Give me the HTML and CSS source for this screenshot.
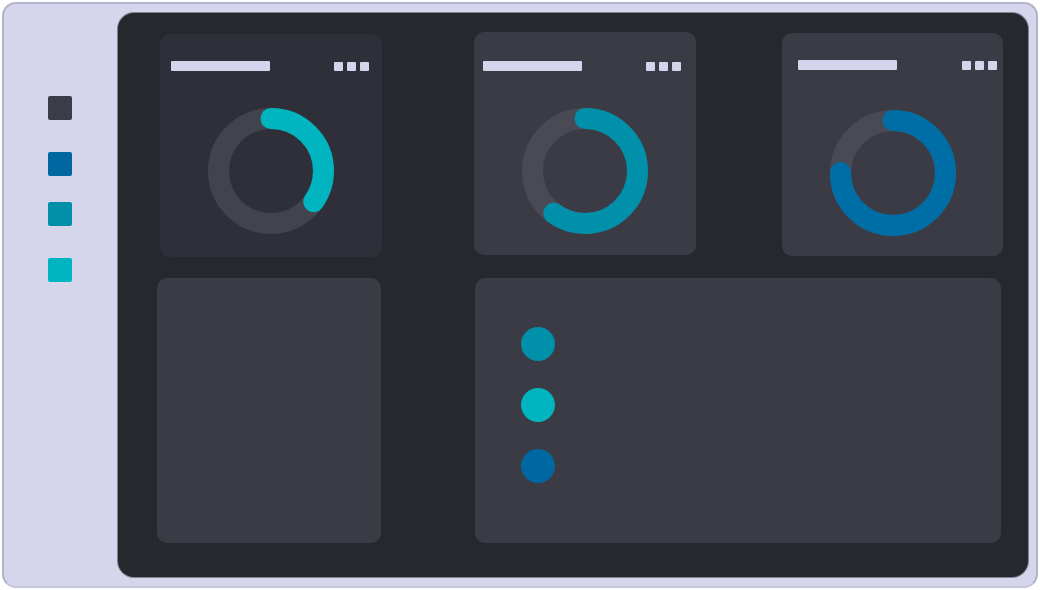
FILE: index.html
```html
<!DOCTYPE html>
<html>
<head>
<meta charset="utf-8">
<link rel="stylesheet" href="styles.css">
</head>
<body>
<div class="frame">
  <aside class="sidebar">
    <div class="swatch swatch-dark"></div>
    <div class="swatch swatch-blue"></div>
    <div class="swatch swatch-teal"></div>
    <div class="swatch swatch-cyan"></div>
  </aside>
  <main class="panel">
    <div class="row row-top">
      <section class="card card-gauge card-a">
        <div class="card-head">
          <span class="title-bar"></span>
          <span class="dots"><i></i><i></i><i></i></span>
        </div>
        <svg class="donut" viewBox="0 0 128 128" width="128" height="128">
          <circle class="track track-a" cx="64" cy="64" r="52.5"></circle>
          <circle class="arc arc-cyan" cx="64" cy="64" r="52.5" stroke-dasharray="115 400" transform="rotate(-90 64 64)"></circle>
        </svg>
      </section>
      <section class="card card-gauge card-b">
        <div class="card-head">
          <span class="title-bar"></span>
          <span class="dots"><i></i><i></i><i></i></span>
        </div>
        <svg class="donut" viewBox="0 0 128 128" width="128" height="128">
          <circle class="track" cx="64" cy="64" r="52.5"></circle>
          <circle class="arc arc-teal" cx="64" cy="64" r="52.5" stroke-dasharray="198 400" transform="rotate(-90 64 64)"></circle>
        </svg>
      </section>
      <section class="card card-gauge card-c">
        <div class="card-head">
          <span class="title-bar"></span>
          <span class="dots"><i></i><i></i><i></i></span>
        </div>
        <svg class="donut" viewBox="0 0 128 128" width="128" height="128">
          <circle class="track" cx="64" cy="64" r="52.5"></circle>
          <circle class="arc arc-blue" cx="64" cy="64" r="52.5" stroke-dasharray="247.4 400" transform="rotate(-90 64 64)"></circle>
        </svg>
      </section>
    </div>
    <div class="row row-bottom">
      <section class="card card-empty"></section>
      <section class="card card-legend">
        <span class="legend-dot dot-teal"></span>
        <span class="legend-dot dot-cyan"></span>
        <span class="legend-dot dot-blue"></span>
      </section>
    </div>
  </main>
</div>
</body>
</html>
```

FILE: styles.css
```css
* { box-sizing: border-box; }

html, body {
  margin: 0;
  padding: 0;
  background: #ffffff;
  font-family: "Liberation Sans", Arial, sans-serif;
}

.frame {
  margin: 2px;
  width: 1036px;
  height: 586px;
  background: #d5d5eb;
  border: 2px solid #b3b3cb;
  border-bottom-color: #c6c6dc;
  border-radius: 14px;
  display: flex;
  padding: 9px 8px 9px 0;
}

.sidebar {
  width: 114px;
  flex: none;
  display: flex;
  flex-direction: column;
  align-items: flex-start;
  padding: 83px 0 0 44px;
}

.swatch {
  width: 24px;
  height: 24px;
  border-radius: 2px;
  flex: none;
}
.swatch-dark { background: #3c3c48; }
.swatch-blue { background: #0067a1; margin-top: 32px; }
.swatch-teal { background: #008fa7; margin-top: 26px; }
.swatch-cyan { background: #00b5c0; margin-top: 32px; }

.panel {
  flex: 1;
  background: #25282c;
  border-radius: 16px;
  box-shadow: 0 0 0 1px rgba(96, 96, 116, 0.7);
  display: flex;
  flex-direction: column;
  padding: 19px 0 0 39px;
}

.row {
  display: flex;
  align-items: flex-start;
}

.card {
  background: #3b3b45;
  border-radius: 10px;
  flex: none;
}

.card-gauge {
  height: 223px;
  display: flex;
  flex-direction: column;
  align-items: center;
}

.card-a {
  width: 222px;
  margin: 2px 0 0 3px;
  background: #2f2f39;
  padding-top: 27px;
}
.card-b {
  width: 222px;
  margin-left: 92px;
  padding-top: 29px;
}
.card-c {
  width: 221px;
  margin: 1px 0 0 86px;
  padding-top: 27px;
}

.card-head {
  align-self: stretch;
  display: flex;
  justify-content: space-between;
  align-items: center;
  height: 10px;
}
.card-a .card-head { padding: 0 13px 0 11px; }
.card-b .card-head { padding: 0 15px 0 9px; }
.card-c .card-head { padding: 0 6px 0 16px; }

.title-bar {
  width: 99px;
  height: 10px;
  background: #d4d4ec;
  border-radius: 1px;
}

.dots {
  display: flex;
  gap: 4px;
}
.dots i {
  display: block;
  width: 9px;
  height: 9px;
  background: #d4d4ec;
  border-radius: 1px;
}

.donut {
  display: block;
  margin-top: 36px;
}
.card-b .donut { margin-top: 36px; }
.card-c .donut { margin-top: 39px; }

.track {
  fill: none;
  stroke: #4a4a55;
  stroke-width: 21;
}
.track-a { stroke: #42434d; }

.arc {
  fill: none;
  stroke-width: 21;
  stroke-linecap: round;
}
.arc-cyan { stroke: #00b5c0; }
.arc-teal { stroke: #0090aa; }
.arc-blue { stroke: #006ea6; }

.row-bottom {
  margin-top: 21px;
}

.card-empty {
  width: 224px;
  height: 265px;
}

.card-legend {
  width: 526px;
  height: 265px;
  margin-left: 94px;
  display: flex;
  flex-direction: column;
  align-items: flex-start;
  gap: 27px;
  padding: 49px 0 0 46px;
}

.legend-dot {
  width: 34px;
  height: 34px;
  border-radius: 50%;
  flex: none;
}
.dot-teal { background: #0090aa; }
.dot-cyan { background: #00b5c0; }
.dot-blue { background: #0068a1; }
```
